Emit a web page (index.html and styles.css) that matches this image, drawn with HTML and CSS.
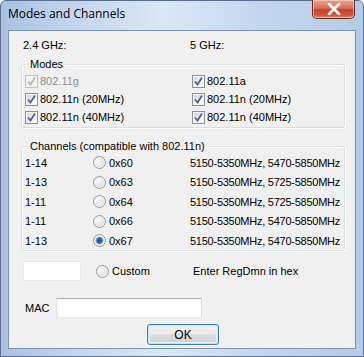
FILE: index.html
```html
<!DOCTYPE html>
<html lang="en">
<head>
    <meta charset="UTF-8">
    <title>Modes and Channels</title>
    <link rel="stylesheet" href="styles.css">
</head>
<body>

<div class="window">
    <div class="titlebar">
        <span class="title">Modes and Channels</span>
        <div class="close-btn">
            <svg width="14" height="12" viewBox="0 0 14 12">
                <path d="M2 1 L12 11 M12 1 L2 11" stroke="#fff" stroke-width="2.6" stroke-linecap="round"/>
            </svg>
        </div>
    </div>

    <div class="client">
        <div class="bands">
            <span>2.4 GHz:</span>
            <span>5 GHz:</span>
        </div>

        <fieldset class="group modes">
            <legend>Modes</legend>
            <div class="mode-grid">
                <label class="check disabled"><span class="box"></span>802.11g</label>
                <label class="check"><span class="box"></span>802.11a</label>
                <label class="check"><span class="box"></span>802.11n (20MHz)</label>
                <label class="check"><span class="box"></span>802.11n (20MHz)</label>
                <label class="check"><span class="box"></span>802.11n (40MHz)</label>
                <label class="check"><span class="box"></span>802.11n (40MHz)</label>
            </div>
        </fieldset>

        <fieldset class="group channels">
            <legend>Channels (compatible with 802.11n)</legend>
            <div class="chan-row r1">
                <span>1-14</span>
                <label class="radio"><span class="dot"></span>0x60</label>
                <span class="range">5150-5350MHz, 5470-5850MHz</span>
            </div>
            <div class="chan-row r2">
                <span>1-13</span>
                <label class="radio"><span class="dot"></span>0x63</label>
                <span class="range">5150-5350MHz, 5725-5850MHz</span>
            </div>
            <div class="chan-row r1">
                <span>1-11</span>
                <label class="radio"><span class="dot"></span>0x64</label>
                <span class="range">5150-5350MHz, 5725-5850MHz</span>
            </div>
            <div class="chan-row r2">
                <span>1-11</span>
                <label class="radio"><span class="dot"></span>0x66</label>
                <span class="range">5150-5350MHz, 5470-5850MHz</span>
            </div>
            <div class="chan-row r1">
                <span>1-13</span>
                <label class="radio on"><span class="dot"></span>0x67</label>
                <span class="range">5150-5350MHz, 5470-5850MHz</span>
            </div>
        </fieldset>

        <div class="custom-row">
            <div class="textbox hex"></div>
            <label class="radio"><span class="dot"></span>Custom</label>
            <span class="hint">Enter RegDmn in hex</span>
        </div>

        <div class="mac-row">
            <span>MAC</span>
            <div class="textbox mac"></div>
        </div>

        <div class="buttons">
            <div class="ok-btn">OK</div>
        </div>
    </div>
</div>

</body>
</html>
```

FILE: styles.css
```css
body {
    margin: 0;
    background: #fff;
    font-family: "Liberation Sans", Arial, sans-serif;
    font-size: 11px;
    color: #000;
    white-space: nowrap;
}
.window {
    width: 364px;
    height: 357px;
    box-sizing: border-box;
    border: 1px solid #5a6f8f;
    border-radius: 6px 6px 0 0;
    background: linear-gradient(90deg, #a9c2e2 0%, #c3d6ee 20%, #dbe7f5 45%, #c5d7ee 70%, #b5cbe7 100%);
    padding: 0 7px 7px;
}
.titlebar {
    height: 29px;
    display: flex;
    align-items: flex-start;
    justify-content: space-between;
}
.title {
    font-family: "Open Sans", "Noto Sans", sans-serif;
    font-size: 12px;
    line-height: 29px;
    margin-top: -2px;
    color: #000;
}
.close-btn {
    width: 43px;
    height: 19px;
    margin-top: -1px;
    margin-right: 1px;
    box-sizing: border-box;
    border: 1px solid #6b2a22;
    border-top: none;
    border-radius: 0 0 5px 5px;
    background: linear-gradient(180deg, #e8a493 0%, #d8705a 45%, #c4402a 55%, #d2563c 85%, #e6947c 100%);
    box-shadow: inset 0 0 0 1px rgba(255, 220, 210, 0.6);
    display: flex;
    align-items: center;
    justify-content: center;
}
.client {
    height: 319px;
    box-sizing: border-box;
    background: #f0f0f0;
    border: 1px solid #7d93b3;
    padding: 7px 10px 0 12px;
}
.bands {
    display: grid;
    grid-template-columns: 167px 1fr;
    padding-left: 2px;
    height: 14px;
    line-height: 14px;
}
.group {
    margin: 0;
    padding: 0;
    border: 1px solid #d5dfe5;
    border-radius: 3px;
    box-shadow: inset 1px 1px 0 #fff, 1px 1px 0 #fff;
}
.group legend {
    padding: 0 2px;
    margin-left: 3px;
    line-height: 14px;
    color: #000;
}
.modes {
    margin-top: 5px;
    height: 71px;
    box-sizing: border-box;
    padding: 1px 0 0 3px;
}
.mode-grid {
    display: grid;
    grid-template-columns: 167px 1fr;
    grid-auto-rows: 18px;
}
.check {
    display: flex;
    align-items: center;
    gap: 2px;
}
.check .box {
    width: 11px;
    height: 11px;
    border: 1px solid #8e8f8f;
    background:
        url("data:image/svg+xml,%3Csvg xmlns='http://www.w3.org/2000/svg' width='11' height='11'%3E%3Cpath d='M2 5.5 L4.5 8.5 L9 1.5' fill='none' stroke='%234a5f97' stroke-width='1.8'/%3E%3C/svg%3E") center no-repeat,
        linear-gradient(135deg, #cbcfd5 0%, #f4f4f4 60%, #fff 100%);
    box-shadow: inset 0 0 0 1px #f4f4f4;
}
.check.disabled {
    color: #8d8d8d;
}
.check.disabled .box {
    border-color: #c1c1c1;
    background:
        url("data:image/svg+xml,%3Csvg xmlns='http://www.w3.org/2000/svg' width='11' height='11'%3E%3Cpath d='M2 5.5 L4.5 8.5 L9 1.5' fill='none' stroke='%23b5b5b5' stroke-width='1.8'/%3E%3C/svg%3E") center no-repeat,
        #f4f4f4;
}
.channels {
    margin-top: 11px;
    padding: 0 0 0 3px;
    height: 112px;
    box-sizing: border-box;
}
.chan-row {
    display: grid;
    grid-template-columns: 68px 97px 1fr;
    align-items: center;
}
.chan-row.r1 {
    height: 19px;
}
.chan-row.r2 {
    height: 20px;
}
.range {
    letter-spacing: -0.25px;
}
.radio {
    display: flex;
    align-items: center;
    gap: 3px;
}
.radio .dot {
    width: 11px;
    height: 11px;
    border-radius: 50%;
    border: 1px solid #9a9a9a;
    background: radial-gradient(circle at 35% 35%, #fafafa 0%, #e4e4e4 55%, #c8c8c8 100%);
    box-shadow: inset 0 0 0 1px #f2f2f2;
}
.radio.on .dot {
    background: radial-gradient(circle at 50% 50%, #1f4b75 0%, #2c6ca3 30%, #7fb0d8 45%, #eaeaea 55%, #d4d4d4 100%);
}
.custom-row {
    margin-top: 10px;
    height: 20px;
    display: grid;
    grid-template-columns: 73px 97px 1fr;
    align-items: center;
    padding-left: 2px;
}
.textbox {
    background: #fff;
    box-sizing: border-box;
    border: 1px solid #e3e9ef;
    border-top-color: #abadb3;
    border-left-color: #e2e3ea;
    border-right-color: #dbdfe6;
}
.hex {
    width: 58px;
    height: 20px;
    border-color: #e6e8ec;
}
.mac-row {
    margin-top: 17px;
    display: flex;
    align-items: center;
    padding-left: 4px;
    gap: 7px;
}
.mac {
    width: 146px;
    height: 20px;
}
.buttons {
    margin-top: 6px;
    padding-left: 126px;
}
.ok-btn {
    width: 72px;
    height: 21px;
    box-sizing: border-box;
    border: 1px solid #3c7fb1;
    border-radius: 3px;
    background: linear-gradient(180deg, #f2f2f2 0%, #ebebeb 48%, #dddddd 52%, #cfcfcf 100%);
    box-shadow: inset 0 0 0 1px #bfe6f8, inset 0 0 0 2px #e5f4fc;
    display: flex;
    align-items: center;
    justify-content: center;
    font-size: 12px;
}
```
